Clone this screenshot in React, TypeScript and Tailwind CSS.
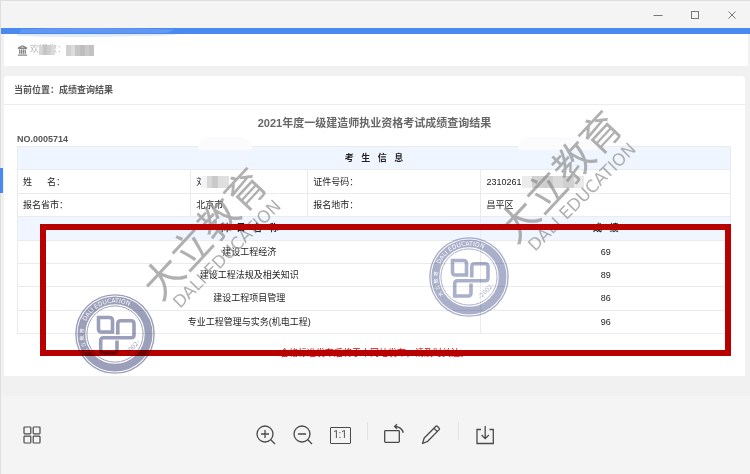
import { Landmark } from 'lucide-react'
import type { ReactNode } from 'react'

type Score = { subject: string; score: number }

const SCORES: Score[] = [
  { subject: '建设工程经济', score: 69 },
  { subject: '建设工程法规及相关知识', score: 89 },
  { subject: '建设工程项目管理', score: 86 },
  { subject: '专业工程管理与实务(机电工程)', score: 96 },
]

// header words are spread with non-breaking spaces
const spread = (s: string, n = 3) => s.split('').join('\u00a0'.repeat(n))

const CELL = 'border border-[#ebebee] p-0'

function WindowButton({ label, children }: { label: string; children: ReactNode }) {
  return (
    <button aria-label={label} className="flex h-full w-[37px] items-center justify-center text-[#777]">
      <svg width="10" height="10" viewBox="0 0 10 10" fill="none" stroke="currentColor">{children}</svg>
    </button>
  )
}

function ToolButton({ label, children }: { label: string; children: ReactNode }) {
  return (
    <button aria-label={label} className="flex h-9 w-[37px] items-center justify-center text-[#4a4a4a]">
      <svg width="24" height="24" viewBox="0 0 24 24" fill="none" stroke="currentColor" strokeWidth="1.3">{children}</svg>
    </button>
  )
}

function Divider() {
  return <div className="mx-2 mb-2 h-[18px] w-px bg-[#e2e2e2]" />
}

function Mosaic({ colors, className }: { colors: string[]; className: string }) {
  return (
    <svg className={className} viewBox={`0 0 ${colors.length} 1`} preserveAspectRatio="none" shapeRendering="crispEdges" aria-hidden="true">
      {colors.map((c, i) => <rect key={i} x={i} width="1.02" height="1" fill={c} />)}
    </svg>
  )
}

function Watermark({ className }: { className: string }) {
  return (
    <svg className={`pointer-events-none absolute ${className}`} width="160" height="170" viewBox="0 0 160 170" fill="#8b8b8b" fillOpacity="0.68" aria-hidden="true">
      <text transform="translate(23 132) rotate(-47)" x="-20" y="14" fontSize="40" fontFamily="Noto Sans CJK SC, sans-serif">大立教育</text>
      <text transform="translate(85 107) rotate(-45)" y="7" fontSize="17" textAnchor="middle" fontFamily="DejaVu Sans, sans-serif">DALI EDUCATION</text>
    </svg>
  )
}

function Seal({ id, className, color }: { id: string; className: string; color: string }) {
  return (
    <svg className={`pointer-events-none absolute mix-blend-multiply ${className}`} width="80" height="80" viewBox="-40 -40 80 80" fill="none" stroke={color} aria-hidden="true">
      <defs>
        <path id={`${id}-en`} d="M-28.8 -12.8A31.5 31.5 0 0 1 26 -17.8" />
        <path id={`${id}-cn`} d="M-25.6 18.3A31.5 31.5 0 0 1 -31.3 -3.5" />
      </defs>
      <circle r="39.1" strokeWidth="1.4" />
      <circle r="33.6" strokeWidth="7.8" />
      <circle r="28.1" strokeWidth="1" />
      <path d="M-16.5 -16.5H-5.5Q-2.5 -16.5 -2.5 -13.5V-2H-13.5Q-16.5 -2 -16.5 -5Z" strokeWidth="3.6" />
      <path d="M2.8 0.5V-10.3Q2.8 -13.3 5.8 -13.3H16Q19 -13.3 19 -10.3V1Q19 3.7 16 3.7H-11.3Q-14.3 3.7 -14.3 6.7V19H-1Q2 19 2 16V6.5" strokeWidth="3.6" />
      <g stroke="none" fontFamily="DejaVu Sans, Noto Sans CJK SC, sans-serif">
        <text fill="#fff" fontSize="6"><textPath href={`#${id}-en`}>DALI EDUCATION</textPath></text>
        <text fill="#fff" fontSize="5"><textPath href={`#${id}-cn`}>{'大\u00a0立\u00a0教\u00a0育'}</textPath></text>
        <text transform="translate(17 14) rotate(-45)" y="2" fill={color} fontSize="6" textAnchor="middle">-2002-</text>
      </g>
    </svg>
  )
}

function ResultTable() {
  return (
    <table className="h-[188px] w-full table-fixed border-collapse text-[9px] leading-3 text-[#222]">
      <colgroup>
        <col className="w-[24.3%]" />
        <col className="w-[16.4%]" />
        <col className="w-[24.3%]" />
        <col className="w-[35%]" />
      </colgroup>
      <tbody>
        <tr className="bg-[#f0f6ff]">
          <th colSpan={4} className={`${CELL} font-bold`}>{spread('考生信息')}</th>
        </tr>
        <tr>
          <td className={`${CELL} pl-[5px]`}>{spread('姓名', 6)}：</td>
          <td className={`${CELL} pl-[5px]`}>
            <div className="flex items-center">
              刘
              <Mosaic className="relative -ml-1 h-3 w-7" colors={['#f4f4f6', '#d8d8d8', '#c9c9c9', '#dedede', '#e0e0e0']} />
            </div>
          </td>
          <td className={`${CELL} pl-[5px]`}>证件号码：</td>
          <td className={`${CELL} pl-[5px]`}>
            <div className="flex items-center">
              2310261
              <Mosaic className="ml-px h-3 w-[62px]" colors={['#ececec', '#d2d2d2', '#cecece', '#dadada', '#d0d0d0', '#e9e9e9']} />
            </div>
          </td>
        </tr>
        <tr>
          <td className={`${CELL} pl-[5px]`}>报名省市：</td>
          <td className={`${CELL} pl-[5px]`}>北京市</td>
          <td className={`${CELL} pl-[5px]`}>报名地市：</td>
          <td className={`${CELL} pl-[5px]`}>昌平区</td>
        </tr>
        <tr className="bg-[#f0f6ff]">
          <th colSpan={3} className={`${CELL} font-bold`}>{spread('科目名称')}</th>
          <th className={`${CELL} font-bold`}>{spread('成绩')}</th>
        </tr>
        {SCORES.map((s) => (
          <tr key={s.subject}>
            <td colSpan={3} className={`${CELL} text-center`}>{s.subject}</td>
            <td className={`${CELL} text-center`}>{s.score}</td>
          </tr>
        ))}
      </tbody>
    </table>
  )
}

export default function App() {
  return (
    <div className="flex min-h-screen flex-col border-l border-[#dedede] bg-[#f4f4f4] font-['Liberation_Sans','Noto_Sans_CJK_SC',sans-serif]">
      <header className="flex h-7 justify-end border-t border-[#dedede]">
        <WindowButton label="最小化"><path d="M.5 5.5h9" /></WindowButton>
        <WindowButton label="最大化"><rect x="1.5" y="1.5" width="7" height="7" /></WindowButton>
        <WindowButton label="关闭"><path d="M1.5 1.5l7 7M8.5 1.5l-7 7" /></WindowButton>
      </header>

      <main className="relative bg-[#f1f1f1] pb-5">
        <div className="h-[6px] bg-[#4a8af0]" />
        <svg className="absolute left-4 top-0" width="164" height="11" viewBox="0 0 164 11" aria-hidden="true">
          <path d="M4 1.5Q60 -1 158 1.5L150 5H2Z" fill="#6398f2" />
          <path d="M0 6H162Q150 8 120 8Q60 10 0 8Z" fill="#e1ecfc" />
        </svg>
        <div className="absolute left-[-1px] top-[140px] h-[25px] w-[3px] bg-[#4a8af0]" />

        <div className="ml-[3px] mr-[2px] flex h-8 items-center bg-white pl-[13px] text-[9px] text-[#bbb]">
          <Landmark size={11} strokeWidth={3} className="text-[#888]" />
          <div className="relative ml-[2px] flex items-center">
            欢迎您：
            <Mosaic className="absolute left-[9px] top-[2px] h-[10px] w-[16px]" colors={['#d6d6d6', '#c4c4c4', '#cecece', '#dadada']} />
          </div>
          <Mosaic className="h-[11px] w-7" colors={['#d0d0d0', '#dcdcdc', '#c6c6c6', '#bebebe', '#cacaca', '#c2c2c2']} />
        </div>

        <section className="relative ml-[3px] mr-[5px] mt-[10px] rounded-t-sm bg-white pb-[17px] text-[#555]">
          <h2 className="h-[29px] border-b border-[#ececec] pl-[10px] text-[9px] font-bold leading-7">当前位置：成绩查询结果</h2>
          <h1 className="mt-[10px] text-center text-[11px] font-bold leading-4 text-[#666]">2021年度一级建造师执业资格考试成绩查询结果</h1>
          <div className="relative ml-[13px] mr-[14px]">
            <p className="h-[15px] text-[9px] font-bold leading-4">NO.0005714</p>
            <ResultTable />
            <div className="absolute left-[181px] top-[6px] h-[13px] w-[54px] rounded-t-xl bg-[#fbfbfe]" />
            <div className="absolute left-[501px] top-[6px] h-[13px] w-[80px] rounded-t-xl bg-[#fbfbfe]" />
          </div>
          <p className="mt-[13px] text-center text-[9px] leading-3 text-[#d00000]">合格标准发布后将于本网站发布，请及时关注。</p>

          <Watermark className="left-[137px] top-[70px]" />
          <Watermark className="left-[492px] top-[13px]" />
          <div className="pointer-events-none absolute bottom-5 left-9 right-[14px] top-[148px] border-[6px] border-[#b90000]" />
          <Seal id="seal-a" className="left-[71px] top-[218px]" color="#9b9fb9" />
          <Seal id="seal-b" className="left-[425px] top-[161px]" color="#abb0ca" />
        </section>
      </main>

      <footer className="grid flex-1 grid-cols-[1fr_auto_1fr] items-center">
        <div className="pl-3">
          <ToolButton label="缩略图">
            <g strokeWidth="1.2">
              <rect x="4" y="4" width="6.8" height="6.8" rx="0.8" />
              <rect x="13.2" y="4" width="6.8" height="6.8" rx="0.8" />
              <rect x="4" y="13.2" width="6.8" height="6.8" rx="0.8" />
              <rect x="13.2" y="13.2" width="6.8" height="6.8" rx="0.8" />
            </g>
          </ToolButton>
        </div>
        <div className="flex items-center">
          <ToolButton label="放大">
            <circle cx="11" cy="11" r="8" />
            <path d="M7 11h8M11 7v8M16.8 16.8l4.2 4.2" />
          </ToolButton>
          <ToolButton label="缩小">
            <circle cx="11" cy="11" r="8" />
            <path d="M7 11h8M16.8 16.8l4.2 4.2" />
          </ToolButton>
          <button aria-label="原始大小" className="flex h-9 w-[37px] items-center justify-center">
            <span className="flex h-[17px] w-[21px] items-center justify-center rounded-[1px] border border-[#4a4a4a] font-['Roboto',sans-serif] text-[10px] leading-none text-[#4a4a4a]">1:1</span>
          </button>
          <Divider />
          <ToolButton label="旋转">
            <rect x="2.7" y="7.7" width="14.6" height="11.6" rx="0.8" />
            <path d="M12.5 3.5Q19.5 3.5 21.3 9.8M15 1.3L12.6 3.5L15 5.8" />
          </ToolButton>
          <ToolButton label="编辑">
            <path d="M3.5 20.5L5.2 15L16.9 3.3Q17.6 2.6 18.3 3.3L20.2 5.2Q20.9 5.9 20.2 6.6L8.7 18.3Z" strokeLinejoin="round" />
            <path d="M15 5.3l3.3 3.3" />
          </ToolButton>
          <Divider />
          <ToolButton label="保存">
            <path d="M8 6.5H4V20.5H20.3V6.5H16.5M12.2 3V15.5M8.6 12L12.2 15.6L15.8 12" />
          </ToolButton>
        </div>
      </footer>
    </div>
  )
}
